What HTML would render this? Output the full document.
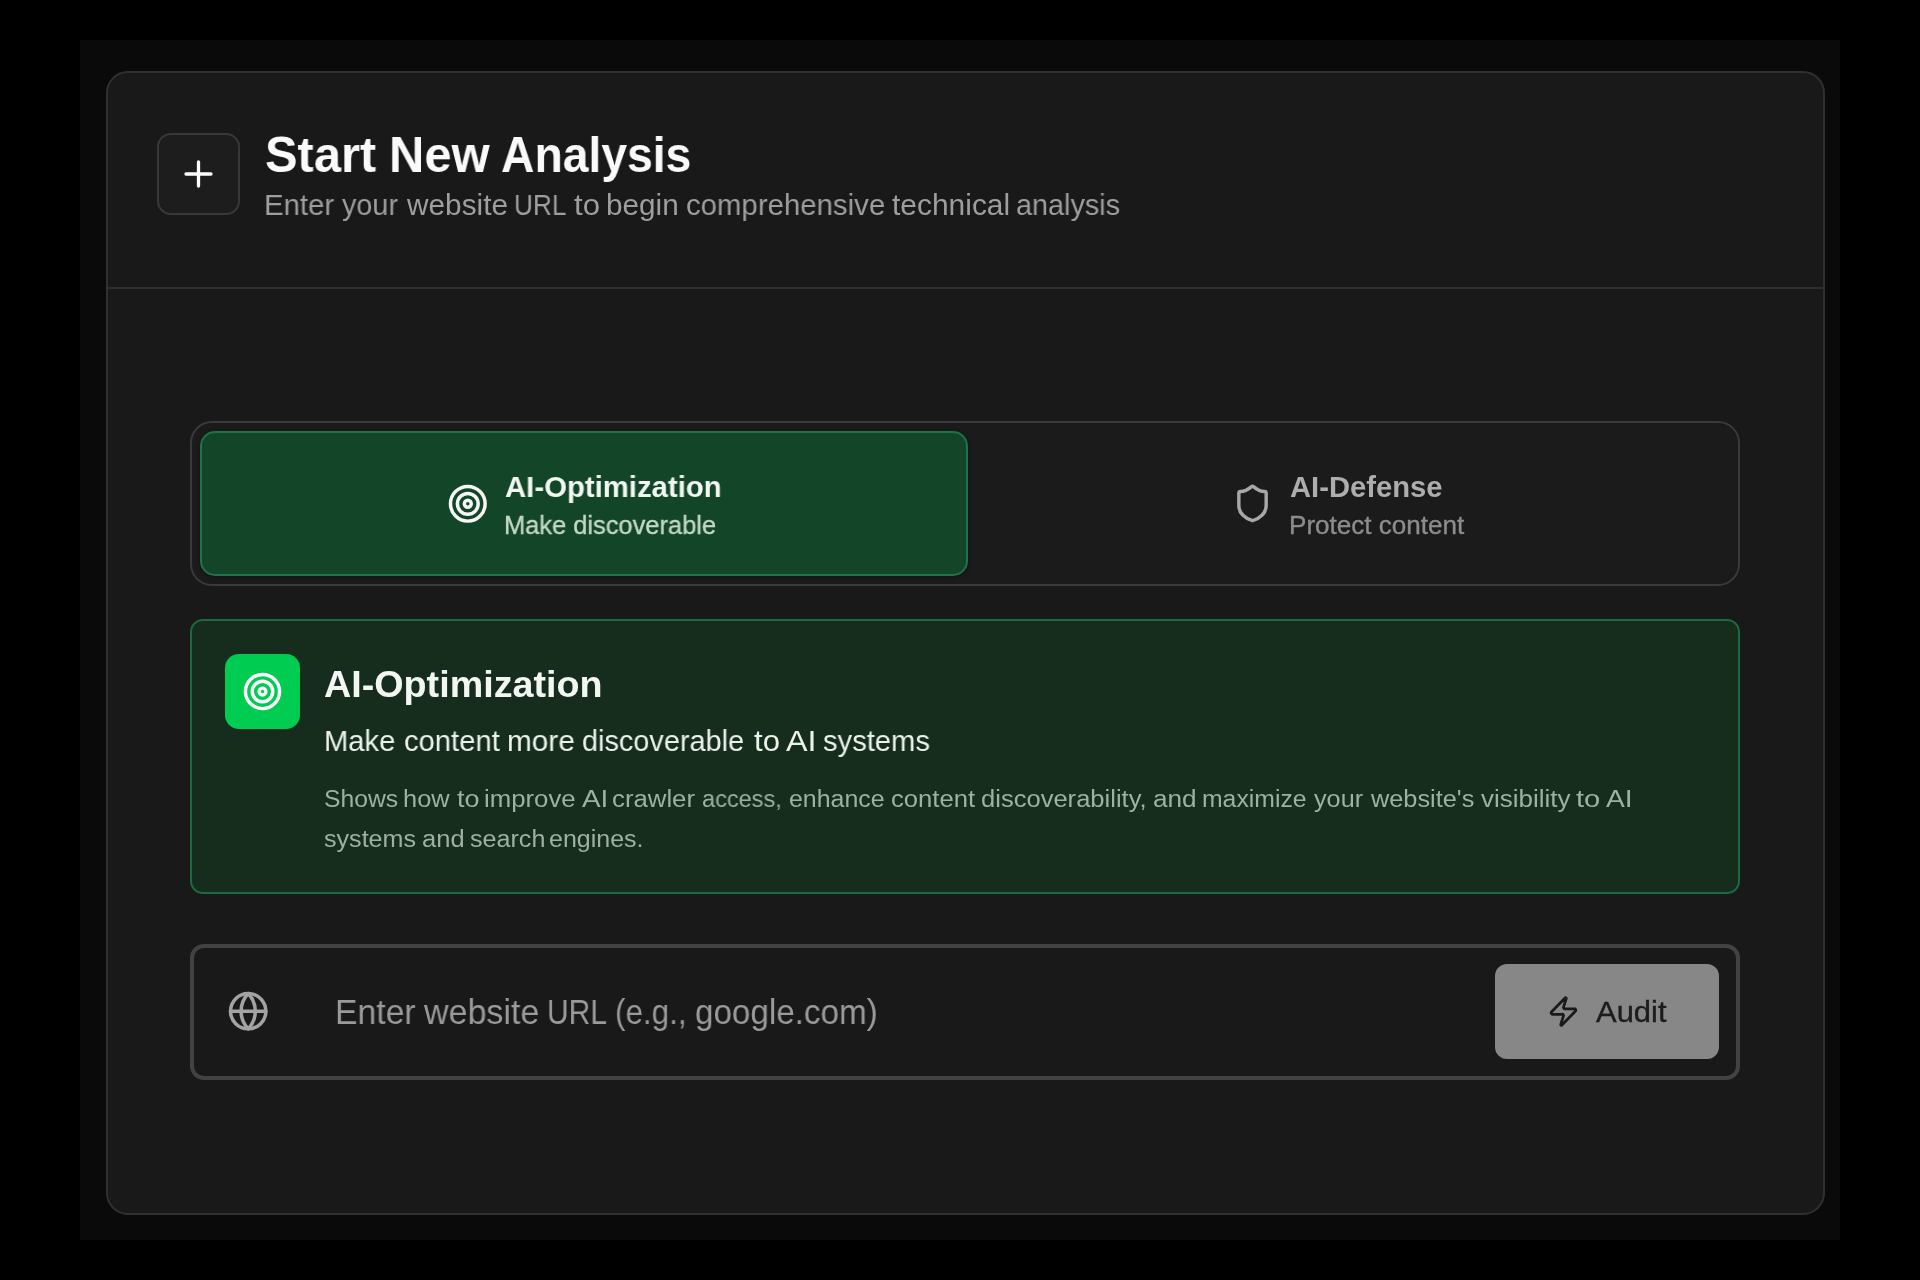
<!DOCTYPE html>
<html>
<head>
<meta charset="utf-8">
<style>
html,body{margin:0;padding:0;}
body{width:1920px;height:1280px;background:#000;position:relative;overflow:hidden;font-family:"Liberation Sans",sans-serif;}
.abs{position:absolute;box-sizing:border-box;}
.frame{left:80px;top:40px;width:1760px;height:1200px;background:#0a0a0a;}
.card{left:106px;top:71px;width:1719px;height:1144px;background:#191919;border:2px solid #303030;border-radius:22px;}
.divider{left:108px;top:287px;width:1715px;height:2px;background:#2f2f2f;}
.plusbox{left:157px;top:133px;width:83px;height:82px;border:2px solid #383838;border-radius:14px;background:#1d1d1d;}
.txt{position:absolute;white-space:nowrap;line-height:1;transform-origin:0 0;will-change:transform;}
.toggle{left:190px;top:421px;width:1550px;height:165px;border:2px solid #3a3a3a;border-radius:22px;background:#1b1b1b;}
.gbtn{left:200px;top:431px;width:768px;height:145px;border:2px solid #1f7347;border-radius:15px;background:#134628;box-shadow:0 1px 4px rgba(0,0,0,0.35);}
.info{left:190px;top:619px;width:1550px;height:275px;border:2px solid #1d6a3e;border-radius:13px;background:#162d1e;}
.gsq{left:225px;top:654px;width:75px;height:75px;border-radius:14px;background:#00cc52;}
.input{left:190px;top:944px;width:1550px;height:136px;border:4px solid #424242;border-radius:14px;background:#191919;}
.audit{left:1495px;top:964px;width:224px;height:95px;border-radius:12px;background:#878787;}
svg{position:absolute;overflow:visible;}
</style>
</head>
<body>
<div class="abs frame"></div>
<div class="abs card"></div>
<div class="abs divider"></div>
<div class="abs plusbox"></div>
<svg style="left:184px;top:160px" width="29" height="28" viewBox="0 0 29 28"><path d="M14.5 2V26M2 14H27" stroke="#fff" stroke-width="3.3" stroke-linecap="round" fill="none"/></svg>

<div class="txt" id="t1a" style="left:265.0px;top:130.2px;font-size:50.42px;font-weight:bold;color:#fafafa;transform:scaleX(0.968);">Start</div>
<div class="txt" id="t1b" style="left:389.2px;top:130.2px;font-size:50.42px;font-weight:bold;color:#fafafa;transform:scaleX(0.970);">New</div>
<div class="txt" id="t1c" style="left:501.0px;top:130.2px;font-size:50.42px;font-weight:bold;color:#fafafa;transform:scaleX(0.918);">Analysis</div>
<!--t2-->
<div class="txt" style="left:264.1px;top:190.1px;font-size:29.71px;color:#9e9e9e;transform:scaleX(0.990);">Enter</div>
<div class="txt" style="left:341.9px;top:190.1px;font-size:29.71px;color:#9e9e9e;transform:scaleX(0.969);">your</div>
<div class="txt" style="left:406.7px;top:190.1px;font-size:29.71px;color:#9e9e9e;transform:scaleX(1.003);">website</div>
<div class="txt" style="left:514.3px;top:190.1px;font-size:29.71px;color:#9e9e9e;transform:scaleX(0.882);">URL</div>
<div class="txt" style="left:574.1px;top:190.1px;font-size:29.71px;color:#9e9e9e;transform:scaleX(1.048);">to</div>
<div class="txt" style="left:606.3px;top:190.1px;font-size:29.71px;color:#9e9e9e;transform:scaleX(0.998);">begin</div>
<div class="txt" style="left:685.5px;top:190.1px;font-size:29.71px;color:#9e9e9e;transform:scaleX(0.989);">comprehensive</div>
<div class="txt" style="left:891.8px;top:190.1px;font-size:29.71px;color:#9e9e9e;transform:scaleX(1.008);">technical</div>
<div class="txt" style="left:1016.3px;top:190.1px;font-size:29.71px;color:#9e9e9e;transform:scaleX(0.970);">analysis</div>

<div class="abs toggle"></div>
<div class="abs gbtn"></div>
<svg style="left:446.9px;top:482.6px" width="41.6" height="41.6" viewBox="0 0 24 24" fill="none" stroke="#f5f8f5" stroke-width="2"><circle cx="12" cy="12" r="10"/><circle cx="12" cy="12" r="6"/><circle cx="12" cy="12" r="2"/></svg>
<div class="txt" id="t3" style="left:504.6px;top:472.1px;font-size:29.93px;font-weight:bold;color:#f2f7f2;transform:scaleX(0.980);">AI-Optimization</div>
<div class="txt" id="t4" style="left:504.3px;top:513.0px;font-size:25.80px;color:#c3d9c6;-webkit-text-stroke:0.35px currentColor;transform:scaleX(0.986);">Make discoverable</div>

<svg style="left:1232px;top:483px" width="41" height="41" viewBox="0 0 24 24" fill="none" stroke="#a8a8a8" stroke-width="2" stroke-linecap="round" stroke-linejoin="round"><path d="M20 13c0 5-3.5 7.5-7.66 8.95a1 1 0 0 1-.67-.01C7.5 20.5 4 18 4 13V6a1 1 0 0 1 1-1c2 0 4.5-1.2 6.24-2.72a1.17 1.17 0 0 1 1.52 0C14.51 3.81 17 5 19 5a1 1 0 0 1 1 1z"/></svg>
<div class="txt" id="t5" style="left:1289.5px;top:472.6px;font-size:29.21px;font-weight:bold;color:#adadad;transform:scaleX(1.000);">AI-Defense</div>
<div class="txt" id="t6" style="left:1288.9px;top:513.0px;font-size:25.00px;color:#8c8c8c;-webkit-text-stroke:0.35px currentColor;transform:scaleX(1.042);">Protect content</div>

<div class="abs info"></div>
<div class="abs gsq"></div>
<svg style="left:242px;top:671px" width="41" height="41" viewBox="0 0 24 24" fill="none" stroke="#ffffff" stroke-width="2"><circle cx="12" cy="12" r="10"/><circle cx="12" cy="12" r="6"/><circle cx="12" cy="12" r="2"/></svg>
<div class="txt" id="t7" style="left:324.3px;top:665.6px;font-size:37.41px;font-weight:bold;color:#f2f7f2;transform:scaleX(1.008);">AI-Optimization</div>
<!--t8-->
<div class="txt" style="left:323.5px;top:726.2px;font-size:30.14px;color:#eaf2ea;transform:scaleX(0.968);">Make</div>
<div class="txt" style="left:403.5px;top:726.2px;font-size:30.14px;color:#eaf2ea;transform:scaleX(0.969);">content</div>
<div class="txt" style="left:506.9px;top:726.2px;font-size:30.14px;color:#eaf2ea;transform:scaleX(0.988);">more</div>
<div class="txt" style="left:582.1px;top:726.2px;font-size:30.14px;color:#eaf2ea;transform:scaleX(0.958);">discoverable</div>
<div class="txt" style="left:754.0px;top:726.2px;font-size:30.14px;color:#eaf2ea;transform:scaleX(1.031);">to</div>
<div class="txt" style="left:786.4px;top:726.2px;font-size:30.14px;color:#eaf2ea;transform:scaleX(1.072);">AI</div>
<div class="txt" style="left:822.7px;top:726.2px;font-size:30.14px;color:#eaf2ea;transform:scaleX(0.968);">systems</div>
<!--t9-->
<div class="txt" style="left:323.7px;top:786.8px;font-size:24.08px;color:#9db0a1;transform:scaleX(1.025);">Shows</div>
<div class="txt" style="left:403.0px;top:786.8px;font-size:24.08px;color:#9db0a1;transform:scaleX(1.055);">how</div>
<div class="txt" style="left:456.7px;top:786.8px;font-size:24.08px;color:#9db0a1;transform:scaleX(1.119);">to</div>
<div class="txt" style="left:483.8px;top:786.8px;font-size:24.08px;color:#9db0a1;transform:scaleX(1.070);">improve</div>
<div class="txt" style="left:582.2px;top:786.8px;font-size:24.08px;color:#9db0a1;transform:scaleX(1.156);">AI</div>
<div class="txt" style="left:612.2px;top:786.8px;font-size:24.08px;color:#9db0a1;transform:scaleX(1.070);">crawler</div>
<div class="txt" style="left:701.7px;top:786.8px;font-size:24.08px;color:#9db0a1;transform:scaleX(0.977);">access,</div>
<div class="txt" style="left:789.2px;top:786.8px;font-size:24.08px;color:#9db0a1;transform:scaleX(1.035);">enhance</div>
<div class="txt" style="left:891.0px;top:786.8px;font-size:24.08px;color:#9db0a1;transform:scaleX(1.064);">content</div>
<div class="txt" style="left:981.4px;top:786.8px;font-size:24.08px;color:#9db0a1;transform:scaleX(1.061);">discoverability,</div>
<div class="txt" style="left:1153.4px;top:786.8px;font-size:24.08px;color:#9db0a1;transform:scaleX(1.087);">and</div>
<div class="txt" style="left:1202.3px;top:786.8px;font-size:24.08px;color:#9db0a1;transform:scaleX(1.028);">maximize</div>
<div class="txt" style="left:1314.1px;top:786.8px;font-size:24.08px;color:#9db0a1;transform:scaleX(1.047);">your</div>
<div class="txt" style="left:1371.2px;top:786.8px;font-size:24.08px;color:#9db0a1;transform:scaleX(1.051);">website's</div>
<div class="txt" style="left:1480.5px;top:786.8px;font-size:24.08px;color:#9db0a1;transform:scaleX(1.079);">visibility</div>
<div class="txt" style="left:1576.2px;top:786.8px;font-size:24.08px;color:#9db0a1;transform:scaleX(1.209);">to</div>
<div class="txt" style="left:1606.3px;top:786.8px;font-size:24.08px;color:#9db0a1;transform:scaleX(1.171);">AI</div>
<!--t10-->
<div class="txt" style="left:324.3px;top:826.6px;font-size:24.08px;color:#9db0a1;transform:scaleX(1.042);">systems</div>
<div class="txt" style="left:421.6px;top:826.6px;font-size:24.08px;color:#9db0a1;transform:scaleX(1.060);">and</div>
<div class="txt" style="left:469.5px;top:826.6px;font-size:24.08px;color:#9db0a1;transform:scaleX(1.043);">search</div>
<div class="txt" style="left:549.1px;top:826.6px;font-size:24.08px;color:#9db0a1;transform:scaleX(1.038);">engines.</div>

<div class="abs input"></div>
<svg style="left:226.5px;top:990.3px" width="42.4" height="42.4" viewBox="0 0 24 24" fill="none" stroke="#a3a3a3" stroke-width="2" stroke-linecap="round" stroke-linejoin="round"><circle cx="12" cy="12" r="10"/><path d="M12 2a14.5 14.5 0 0 0 0 20 14.5 14.5 0 0 0 0-20"/><path d="M2 12h20"/></svg>
<!--t11-->
<div class="txt" style="left:334.5px;top:995.2px;font-size:34.93px;color:#9a9a9a;transform:scaleX(0.966);">Enter</div>
<div class="txt" style="left:423.9px;top:995.2px;font-size:34.93px;color:#9a9a9a;transform:scaleX(0.974);">website</div>
<div class="txt" style="left:546.5px;top:995.2px;font-size:34.93px;color:#9a9a9a;transform:scaleX(0.858);">URL</div>
<div class="txt" style="left:615.4px;top:995.2px;font-size:34.93px;color:#9a9a9a;transform:scaleX(0.899);">(e.g.,</div>
<div class="txt" style="left:694.7px;top:995.2px;font-size:34.93px;color:#9a9a9a;transform:scaleX(0.951);">google.com)</div>
<div class="abs audit"></div>
<svg style="left:1547px;top:995px" width="33" height="33" viewBox="0 0 24 24" fill="none" stroke="#1a1a1a" stroke-width="2" stroke-linecap="round" stroke-linejoin="round"><path d="M4 14a1 1 0 0 1-.78-1.63l9.9-10.2a.5.5 0 0 1 .86.46l-1.92 6.02A1 1 0 0 0 13 10h7a1 1 0 0 1 .78 1.63l-9.9 10.2a.5.5 0 0 1-.86-.46l1.92-6.02A1 1 0 0 0 11 14z"/></svg>
<div class="txt" id="t12" style="left:1596.4px;top:998.3px;font-size:29.21px;color:#1c1c1c;-webkit-text-stroke:0.35px currentColor;transform:scaleX(1.059);">Audit</div>
</body>
</html>
